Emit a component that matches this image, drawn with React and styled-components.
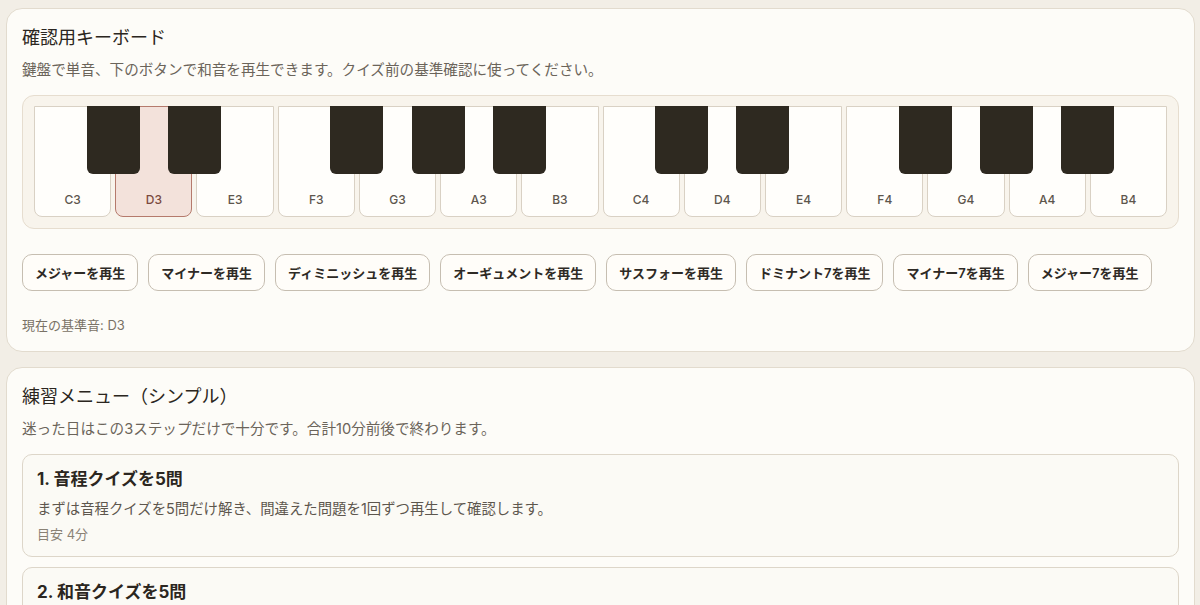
import React, { useState } from "react";
import styled, { createGlobalStyle } from "styled-components";

const GlobalStyle = createGlobalStyle`
  html, body {
    margin: 0;
    padding: 0;
    background: #f2eee6;
  }
  body {
    font-family: Inter, "Noto Sans CJK JP", sans-serif;
    color: #2b2620;
  }
`;

const WHITE_KEYS = ["C3", "D3", "E3", "F3", "G3", "A3", "B3", "C4", "D4", "E4", "F4", "G4", "A4", "B4"];
// black keys sit on the boundary after these white key indexes
const BLACK_AFTER = [0, 1, 3, 4, 5, 7, 8, 10, 11, 12];

const CHORDS = [
  "メジャーを再生",
  "マイナーを再生",
  "ディミニッシュを再生",
  "オーギュメントを再生",
  "サスフォーを再生",
  "ドミナント7を再生",
  "マイナー7を再生",
  "メジャー7を再生",
];

const STEPS = [
  {
    title: "1. 音程クイズを5問",
    text: "まずは音程クイズを5問だけ解き、間違えた問題を1回ずつ再生して確認します。",
    time: "目安 4分",
  },
  {
    title: "2. 和音クイズを5問",
    text: "メジャーとマイナーを中心に、和音の響きを聞き分けます。",
    time: "目安 4分",
  },
];

function App() {
  const [current, setCurrent] = useState("D3");

  return (
    <Page>
      <GlobalStyle />
      <Card>
        <Title>確認用キーボード</Title>
        <Lead>鍵盤で単音、下のボタンで和音を再生できます。クイズ前の基準確認に使ってください。</Lead>
        <KeyboardFrame>
          <Keys>
            {WHITE_KEYS.map((k) => (
              <WhiteKey key={k} $active={k === current} onClick={() => setCurrent(k)}>
                <KeyLabel $active={k === current}>{k}</KeyLabel>
              </WhiteKey>
            ))}
            {BLACK_AFTER.map((i) => (
              <BlackKey key={i} $after={i} />
            ))}
          </Keys>
        </KeyboardFrame>
        <ChordRow>
          {CHORDS.map((c) => (
            <ChordButton key={c}>{c}</ChordButton>
          ))}
        </ChordRow>
        <Status>現在の基準音: {current}</Status>
      </Card>

      <Card>
        <Title>練習メニュー（シンプル）</Title>
        <Lead>迷った日はこの3ステップだけで十分です。合計10分前後で終わります。</Lead>
        <StepList>
          {STEPS.map((s) => (
            <Step key={s.title}>
              <StepTitle>{s.title}</StepTitle>
              <StepText>{s.text}</StepText>
              <StepTime>{s.time}</StepTime>
            </Step>
          ))}
        </StepList>
      </Card>
    </Page>
  );
}

export default App;

const Page = styled.div`
  display: flex;
  flex-direction: column;
  gap: 15px;
  padding: 8px 5px 0 6px;
`;

const Card = styled.section`
  background: #fdfcf8;
  border: 1px solid #e2dbce;
  border-radius: 16px;
  padding: 15px 15px 16px;
`;

const Title = styled.h2`
  margin: 0 0 8px;
  font-size: 18px;
  line-height: 28px;
  font-weight: 400;
  color: #2b2620;
`;

const Lead = styled.p`
  margin: 0 0 15px;
  font-size: 14.6px;
  line-height: 20px;
  color: #6b645a;
`;

const KeyboardFrame = styled.div`
  background: #f8f4ec;
  border: 1px solid #e6ddcf;
  border-radius: 12px;
  padding: 10px 11px 11px;
`;

const Keys = styled.div`
  position: relative;
  display: flex;
  gap: 4px;
  height: 111px;
`;

const WhiteKey = styled.div`
  flex: 1;
  display: flex;
  align-items: flex-end;
  justify-content: center;
  padding-bottom: 8px;
  box-sizing: border-box;
  background: ${(p) => (p.$active ? "#f3e2db" : "#fffefb")};
  border: 1px solid ${(p) => (p.$active ? "#b57a6c" : "#d9d1c4")};
  border-radius: 0 0 8px 8px;
  cursor: pointer;
`;

const KeyLabel = styled.span`
  font-size: 12px;
  line-height: 16px;
  font-weight: 500;
  color: ${(p) => (p.$active ? "#7a4a3f" : "#5d564d")};
`;

const BlackKey = styled.div`
  position: absolute;
  top: 0;
  left: ${(p) => `calc((100% - 52px) / 14 * ${p.$after + 1} + ${p.$after * 4 + 2}px - 26.5px)`};
  width: 53px;
  height: 68px;
  background: #2e2920;
  border-radius: 0 0 6px 6px;
`;

const ChordRow = styled.div`
  display: flex;
  flex-wrap: wrap;
  gap: 10px;
  margin-top: 25px;
`;

const ChordButton = styled.button`
  height: 37px;
  padding: 0 12px;
  background: #fffdf9;
  border: 1px solid #c6beb1;
  border-radius: 10px;
  font-family: Inter, "Noto Sans CJK JP", sans-serif;
  font-size: 13px;
  font-weight: 600;
  color: #2e2a25;
  cursor: pointer;
`;

const Status = styled.div`
  margin-top: 24px;
  font-size: 13px;
  line-height: 20px;
  color: #7a7266;
`;

const StepList = styled.div`
  display: flex;
  flex-direction: column;
  gap: 10px;
`;

const Step = styled.div`
  background: #fbfaf5;
  border: 1px solid #ddd6c9;
  border-radius: 10px;
  padding: 13px 14px;
`;

const StepTitle = styled.div`
  font-size: 17px;
  line-height: 22px;
  font-weight: 700;
  color: #2b2620;
`;

const StepText = styled.div`
  margin-top: 8px;
  font-size: 14.4px;
  line-height: 22px;
  color: #5d564d;
`;

const StepTime = styled.div`
  margin-top: 5px;
  font-size: 13px;
  line-height: 18px;
  color: #8a8275;
`;
